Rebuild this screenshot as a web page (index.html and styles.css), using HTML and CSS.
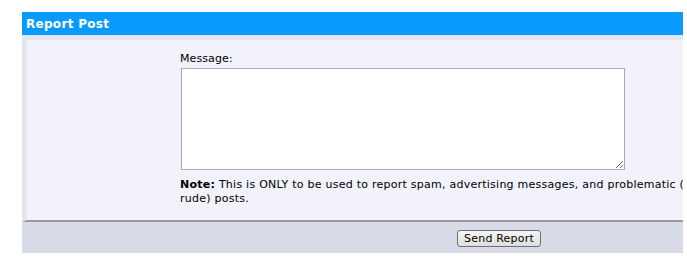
FILE: index.html
```html
<!DOCTYPE html>
<html lang="en">
<head>
  <meta charset="UTF-8" />
  <title>Report Post</title>
  <link rel="stylesheet" href="styles.css">
</head>
<body>
  <div class="frame">
    <div class="board">
      <div class="head">Report Post</div>
      <div class="panel">
        <div class="field">
          <label for="message">Message:</label>
          <textarea id="message" class="message"></textarea>
          <div class="note"><b>Note:</b> This is ONLY to be used to report spam, advertising messages, and problematic (harassment, fighting, or rude) posts.</div>
        </div>
      </div>
      <div class="foot">
        <button type="button" class="send">Send Report</button>
      </div>
    </div>
  </div>
</body>
</html>
```

FILE: styles.css
```css
body {
  margin: 0;
  background-color: #fff;
  font-family: 'DejaVu Sans', Verdana, sans-serif;
  font-size: 11px;
  color: #000;
}
.frame {
  margin: 12px 0 0 22px;
  width: 661px;
  overflow: hidden;
}
.board {
  width: 954px;
}
.head {
  height: 21px;
  line-height: 21px;
  padding: 2px 0 0 4px;
  background-color: #089bfd;
  color: #fff;
  font-weight: bold;
  font-size: 12px;
  letter-spacing: 0.3px;
}
.panel {
  background-color: #f2f2fb;
  border-top: 5px solid #e4e6ef;
  border-left: 5px solid #e4e6ef;
  border-bottom: 2px solid #9a9a9a;
  padding: 12px 0 14px 153px;
}
.field {
  width: 670px;
  line-height: 14px;
}
.field label {
  display: block;
  letter-spacing: 0.1px;
}
.message {
  display: block;
  box-sizing: border-box;
  width: 444px;
  height: 102px;
  margin: 2px 0 0 1px;
  border: 1px solid #a9a9a9;
  background-color: #fff;
  padding: 2px;
  font-family: inherit;
}
.note {
  margin-top: 8px;
  width: 665px;
  letter-spacing: 0.25px;
}
.foot {
  height: 31px;
  background-color: #d9dce8;
  text-align: center;
  padding-top: 8px;
  box-sizing: border-box;
}
.send {
  font-family: 'DejaVu Sans', Verdana, sans-serif;
  font-size: 11px;
  height: 17px;
  line-height: 13px;
  padding: 0 6px;
  border: 1px solid #707070;
  border-radius: 3px;
  background: linear-gradient(#f6f6f6, #dedede);
  color: #000;
  letter-spacing: 0.2px;
}
```
